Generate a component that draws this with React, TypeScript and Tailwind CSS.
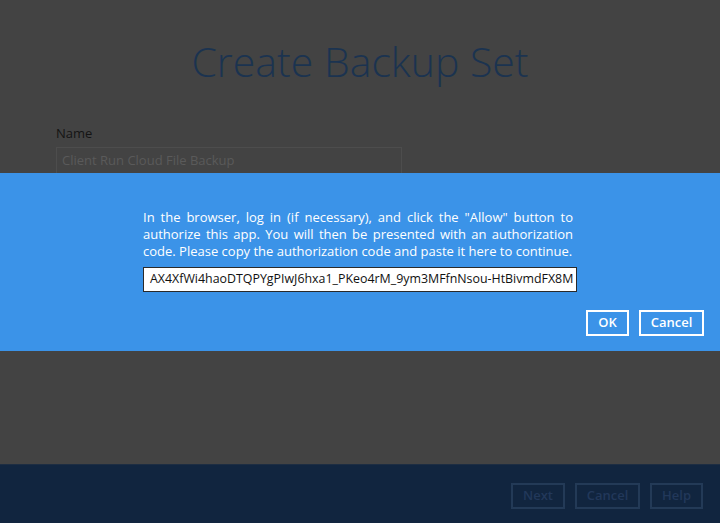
import React from "react";

export default function App() {
  return (
    <div
      className="relative w-[720px] h-[523px] overflow-hidden bg-[#434343] flex flex-col"
      style={{ fontFamily: '"Open Sans", "Noto Sans", sans-serif' }}
    >
      <div className="flex-1 flex flex-col">
        <h1 className="mt-[33px] text-center text-[41px] leading-[56px] font-light text-[#1b3350]">
          Create Backup Set
        </h1>
        <div className="ml-[56px] mt-[35px] flex flex-col">
          <label className="text-[13px] leading-[18px] text-[#141414]">Name</label>
          <div className="mt-[5px] w-[346px] h-[27px] border border-[#4d4d4d] px-[5px] flex items-center text-[13px] text-[#5a5a5a]">
            Client Run Cloud File Backup
          </div>
        </div>
      </div>
      <div className="h-[59px] bg-[#11253f] border-t border-[#1d2d42] flex items-start justify-end gap-[10px] pr-[17px] pt-[18px]">
        <div className="w-[54px] h-[26px] border-2 border-[#233a57] flex items-center justify-center text-[13px] font-semibold text-[#22385a]">Next</div>
        <div className="w-[65px] h-[26px] border-2 border-[#233a57] flex items-center justify-center text-[13px] font-semibold text-[#22385a]">Cancel</div>
        <div className="w-[53px] h-[26px] border-2 border-[#233a57] flex items-center justify-center text-[13px] font-semibold text-[#22385a]">Help</div>
      </div>

      <div className="absolute left-0 right-0 top-[173px] h-[178px] bg-[#3b93e8] flex flex-col">
        <div className="mx-auto w-[434px] mt-[36px]">
          <p className="text-[13px] leading-[17px] text-white text-justify w-[430px]">
            In the browser, log in (if necessary), and click the "Allow" button to authorize this app. You will then be presented with an authorization code. Please copy the authorization code and paste it here to continue.
          </p>
          <div className="mt-[7px] h-[25px] w-[434px] bg-white border border-[#2a2a2a] flex items-center px-[6px] text-[12.4px] text-[#111] whitespace-nowrap overflow-hidden">
            AX4XfWi4haoDTQPYgPIwJ6hxa1_PKeo4rM_9ym3MFfnNsou-HtBivmdFX8M
          </div>
        </div>
        <div className="mt-[18px] flex justify-end gap-[10px] pr-[16px]">
          <div className="w-[43px] h-[26px] border-2 border-white flex items-center justify-center text-[13px] font-semibold text-white">OK</div>
          <div className="w-[65px] h-[26px] border-2 border-white flex items-center justify-center text-[13px] font-semibold text-white">Cancel</div>
        </div>
      </div>
    </div>
  );
}
